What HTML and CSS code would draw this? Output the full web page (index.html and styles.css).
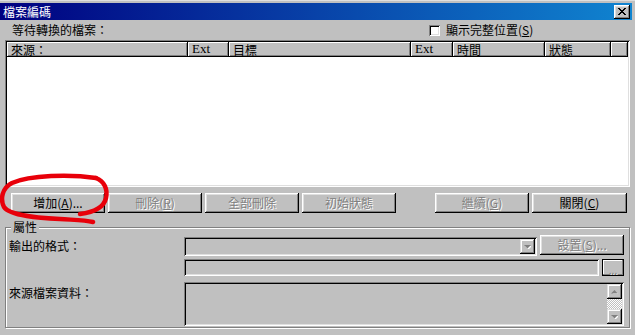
FILE: index.html
```html
<!DOCTYPE html>
<html lang="zh-Hant">
<head>
    <meta charset="UTF-8">
    <meta name="viewport" content="width=device-width, initial-scale=1.0">
    <title>檔案編碼</title>
    <link rel="stylesheet" href="styles.css">
</head>
<body>
<div class="window">
    <div class="titlebar">
        <span class="title">檔案編碼</span>
        <button class="close-btn" aria-label="close">
            <svg width="8" height="7" viewBox="0 0 8 7"><path d="M0 0h2v1h1v1h2V1h1V0h2v1H7v1H6v1H5v1h1v1h1v1h1v1H6V6H5V5H3v1H2v1H0V6h1V5h1V4h1V3H2V2H1V1H0z" fill="#000"/></svg>
        </button>
    </div>

    <div class="content">
        <div class="top-row">
            <span class="caption">等待轉換的檔案：</span>
            <label class="check"><span class="checkbox"></span>顯示完整位置(<u>S</u>)</label>
        </div>

        <div class="list">
            <div class="list-header">
                <div class="col c-src">來源：</div>
                <div class="col c-ext latin">Ext</div>
                <div class="col c-dst">目標</div>
                <div class="col c-ext2 latin">Ext</div>
                <div class="col c-time">時間</div>
                <div class="col c-state">狀態</div>
                <div class="col c-fill"></div>
            </div>
            <div class="list-body"></div>
        </div>

        <div class="button-row">
            <button class="btn">增加(<u>A</u>)...</button>
            <button class="btn disabled">刪除(<u>R</u>)</button>
            <button class="btn disabled">全部刪除</button>
            <button class="btn disabled">初始狀態</button>
            <button class="btn disabled push-right">繼續(<u>G</u>)</button>
            <button class="btn wide">關閉(<u>C</u>)</button>
        </div>

        <fieldset class="group">
            <legend>屬性</legend>
            <div class="prop-row row-format">
                <span class="prop-label">輸出的格式：</span>
                <div class="field combo">
                    <span class="drop-btn">
                        <svg width="7" height="4" viewBox="0 0 7 4"><path d="M1 1h7l-3.5 3.5z" fill="#fff"/><path d="M0 0h7l-3.5 3.5z" fill="#808080"/></svg>
                    </span>
                </div>
                <button class="btn disabled setup">設置(<u>S</u>)...</button>
            </div>
            <div class="prop-row row-path">
                <span class="prop-label"></span>
                <div class="field path"></div>
                <button class="btn disabled dots">...</button>
            </div>
            <div class="prop-row row-info">
                <span class="prop-label top">來源檔案資料：</span>
                <div class="field info">
                    <div class="scrollbar">
                        <span class="sb-btn">
                            <svg width="7" height="4" viewBox="0 0 7 4"><path d="M1 4.5h7l-3.5-3.5z" fill="#fff"/><path d="M0 3.5h7L3.5 0z" fill="#808080"/></svg>
                        </span>
                        <span class="sb-track"></span>
                        <span class="sb-btn">
                            <svg width="7" height="4" viewBox="0 0 7 4"><path d="M1 1h7l-3.5 3.5z" fill="#fff"/><path d="M0 0h7l-3.5 3.5z" fill="#808080"/></svg>
                        </span>
                    </div>
                </div>
            </div>
        </fieldset>
    </div>

    <!-- red marker drawn over the screenshot -->
    <svg class="scribble" width="115" height="56" viewBox="0 0 115 56">
        <path d="M96 7C70 3 30 4 12 12C2 17 0 28 4 36C10 45 40 47 60 48C75 49 85 49 93 51" />
        <path d="M96 7C104 10 108 18 106 27C104 36 96 41 80 43" />
    </svg>
</div>
</body>
</html>
```

FILE: styles.css
```css
body {
    margin: 0;
    background-color: #c0c0c0;
    font-family: "Noto Sans CJK TC", "Liberation Sans", sans-serif;
    font-size: 12px;
    line-height: 12px;
    color: #000;
}

.window {
    position: relative;
    width: 635px;
    height: 335px;
    box-sizing: border-box;
    padding-top: 2px;
    border-top: 1px solid #dfdfdf;
    overflow: hidden;
}

/* title bar */
.titlebar {
    display: flex;
    align-items: center;
    justify-content: space-between;
    height: 17px;
    margin-right: 3px;
    padding: 0 2px 0 3px;
    background: linear-gradient(90deg, #000080, #1084d0);
}
.title {
    color: #fff;
    font-size: 12px;
    letter-spacing: 0;
}
.close-btn {
    display: flex;
    align-items: center;
    justify-content: center;
    width: 16px;
    height: 14px;
    padding: 0;
    border: none;
    background-color: #c0c0c0;
    box-shadow: inset -1px -1px #000, inset 1px 1px #fff, inset -2px -2px #808080, inset 2px 2px #dfdfdf;
}

.content {
    padding: 0 5px 0 5px;
}

/* checkbox line */
.top-row {
    display: flex;
    align-items: center;
    height: 20px;
}
.caption {
    flex: 0 0 424px;
    padding-left: 7px;
    box-sizing: border-box;
}
.check {
    display: flex;
    align-items: center;
}
.checkbox {
    width: 11px;
    height: 11px;
    margin-right: 6px;
    background-color: #fff;
    box-shadow: inset 1px 1px #808080, inset -1px -1px #fff, inset 2px 2px #000, inset -2px -2px #dfdfdf;
}

u {
    text-decoration: underline;
    text-underline-offset: 1px;
}

/* file list */
.list {
    display: flex;
    flex-direction: column;
    height: 147px;
    padding: 2px;
    box-sizing: border-box;
    background-color: #fff;
    box-shadow: inset 1px 1px #808080, inset -1px -1px #fff, inset 2px 2px #000, inset -2px -2px #dfdfdf;
}
.list-header {
    display: flex;
    height: 15px;
}
.col {
    height: 15px;
    box-sizing: border-box;
    padding: 2px 0 0 4px;
    background-color: #c0c0c0;
    box-shadow: inset -1px -1px #000, inset 1px 1px #fff, inset -2px -2px #808080;
    white-space: nowrap;
    overflow: hidden;
}
.latin {
    font-family: "Liberation Serif", serif;
    font-size: 13px;
    padding-top: 1px;
}
.c-src { width: 181px; }
.c-ext { width: 41px; }
.c-dst { width: 182px; }
.c-ext2 { width: 42px; }
.c-time { width: 92px; }
.c-state { width: 66px; }
.c-fill { flex: 1; }
.list-body {
    flex: 1;
}

/* buttons */
.button-row {
    display: flex;
    align-items: center;
    gap: 3px;
    margin-top: 6px;
    padding: 0 3px 0 6px;
}
.btn {
    width: 94px;
    height: 20px;
    padding: 0;
    border: none;
    font-family: inherit;
    font-size: 12px;
    line-height: 12px;
    color: #000;
    background-color: #c0c0c0;
    box-shadow: inset -1px -1px #000, inset 1px 1px #fff, inset -2px -2px #808080, inset 2px 2px #dfdfdf;
}
.btn.disabled {
    color: #808080;
    text-shadow: 1px 1px 0 #fff;
}
.btn.wide {
    width: 95px;
}
.push-right {
    margin-left: auto;
}

/* properties group */
.group {
    margin: 8px 0 0 0;
    padding: 2px 5px 1px 3px;
    min-width: 0;
    border: 1px solid #808080;
    box-shadow: inset 1px 1px #fff, 1px 1px #fff;
}
.group legend {
    margin-left: 2px;
    padding: 0 2px;
    background-color: #c0c0c0;
    line-height: 12px;
}
.prop-row {
    display: flex;
}
.prop-label {
    flex: 0 0 175px;
    align-self: center;
}
.prop-label.top {
    align-self: flex-start;
    padding-top: 5px;
}
.field {
    box-sizing: border-box;
    background-color: #c0c0c0;
    box-shadow: inset 1px 1px #808080, inset -1px -1px #fff, inset 2px 2px #000, inset -2px -2px #dfdfdf;
}

.row-format {
    height: 21px;
    align-items: flex-start;
}
.combo {
    display: flex;
    justify-content: flex-end;
    width: 354px;
    height: 19px;
    margin-top: 2px;
    padding: 2px;
}
.drop-btn,
.sb-btn {
    display: flex;
    align-items: center;
    justify-content: center;
    width: 15px;
    height: 15px;
    background-color: #c0c0c0;
    box-shadow: inset -1px -1px #000, inset 1px 1px #dfdfdf, inset -2px -2px #808080, inset 2px 2px #fff;
}
.setup {
    width: 84px;
    margin-left: 3px;
}

.row-path {
    height: 17px;
    margin-top: 3px;
}
.path {
    width: 416px;
    height: 17px;
}
.dots {
    width: 22px;
    height: 17px;
    margin-left: 3px;
    padding-top: 4px;
    font-size: 10px;
    box-shadow: inset -1px -1px #000, inset 1px 1px #000, inset -2px -2px #808080, inset 2px 2px #fff;
}

.row-info {
    height: 44px;
    margin-top: 6px;
}
.info {
    display: flex;
    justify-content: flex-end;
    width: 441px;
    height: 44px;
    padding: 2px;
}
.scrollbar {
    display: flex;
    flex-direction: column;
    width: 15px;
}
.sb-track {
    flex: 1;
    background: repeating-conic-gradient(#c0c0c0 0 25%, #fff 0 50%) 0 0 / 2px 2px;
}

/* hand drawn red ring around the add button */
.scribble {
    position: absolute;
    left: 0;
    top: 170px;
    fill: none;
    stroke: #e8000a;
    stroke-width: 4.5;
    stroke-linecap: round;
}
```
